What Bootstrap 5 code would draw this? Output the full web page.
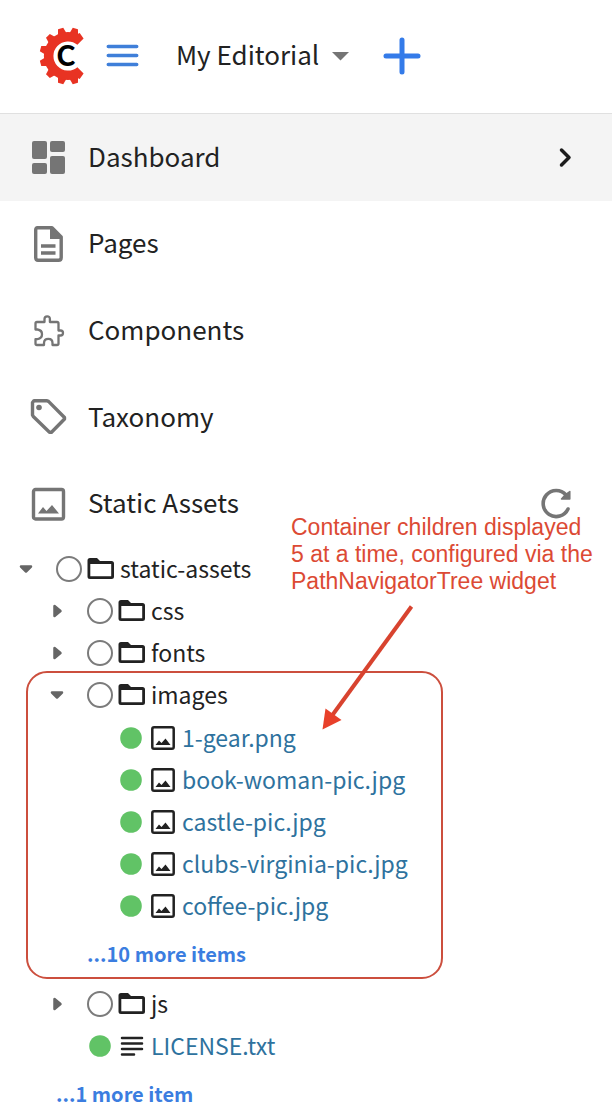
<!DOCTYPE html>
<html lang="en">
<head>
<meta charset="utf-8">
<meta name="viewport" content="width=device-width, initial-scale=1">
<title>My Editorial</title>
<link href="https://cdn.jsdelivr.net/npm/bootstrap@5.3.0/dist/css/bootstrap.min.css" rel="stylesheet">
<style>
  body { font-family: "Noto Sans CJK SC", "Noto Sans CJK JP", "Open Sans", sans-serif; color: #222; background: #fff; }
  svg { display: block; flex: none; }
  .icon-btn { border: 0; background: none; padding: 0; color: inherit; }
  .topbar { height: 114px; padding: 0 36px 2px; border-bottom: 1px solid #e0e0e0; }
  .brand-blue { color: #3f7fd9; }
  .plus-blue { color: #347be9; }
  .site-name { font-size: 26px; line-height: 36px; margin-left: 34px; gap: 8px; }
  .site-name span, .side-link span { padding-bottom: 3px; }
  .side-nav { height: 433px; }
  .side-link { padding: 0 28px; gap: 20px; font-size: 26px; line-height: 36px; color: #222; text-decoration: none; }
  .side-link.current { background: #f4f4f4; }
  .ico-gray { color: #757575; }
  .tree ul, ul.tree { list-style: none; margin: 0; padding: 0; }
  ul.tree { padding: 1px 0 0 14px; }
  .tree ul { padding-left: 31px; }
  .tree .leaves { padding-top: 1px; }
  .tree-row { height: 42px; font-size: 23px; line-height: 32px; }
  .tree-label { padding-bottom: 3px; }
  .twist { width: 24px; height: 24px; margin-right: 18px; color: #666; }
  .kind { width: 30px; margin: 0 4px; }
  .tree-row a { color: #2e729e; text-decoration: none; }
  .more-row { padding: 6px 0 8px 11px; font-size: 20px; line-height: 42px; }
  .more-row a { color: #3b7de0; font-weight: 700; text-decoration: none; }
  .frame-box { left: -19px; top: -3px; width: 417px; height: 308px; border: 2px solid #cc4f3e; border-radius: 21px; pointer-events: none; }
  .callout-text { left: 291px; top: 514px; font: 23px/27px "Liberation Sans", Arial, sans-serif; color: #dc4a34; margin: 0; white-space: nowrap; }
  .callout-arrow { left: 316px; top: 600px; pointer-events: none; }
</style>
</head>
<body>
<svg width="0" height="0" class="position-absolute" aria-hidden="true">
  <symbol id="i-folder" viewBox="0 0 30 26"><path d="M1.500 4.500Q1.500 2 4 2H11L14 5H25.500Q28 5 28 7.500V20.500Q28 23 25.500 23H4Q1.500 23 1.500 20.500ZM4.300 8V20.200H25.200V8Z" fill="currentColor" fill-rule="evenodd"/></symbol>
  <symbol id="i-ring" viewBox="0 0 26 26"><circle cx="13" cy="13" r="12" fill="none" stroke="#7b7b7b" stroke-width="2"/></symbol>
  <symbol id="i-dot" viewBox="0 0 26 26"><circle cx="13" cy="13" r="10.800" fill="#61c366"/></symbol>
  <symbol id="i-image" viewBox="0 0 24 24"><rect x="1.300" y="1.300" width="21.400" height="21.400" rx="1.800" fill="none" stroke="currentColor" stroke-width="2.500"/><path d="M4.500 19L8 14.500L10.500 17L14.500 12.500L19.500 19Z" fill="currentColor"/></symbol>
  <symbol id="i-right" viewBox="0 0 24 24"><path d="M9.500 7V17L15.500 12Z" fill="currentColor" stroke="currentColor" stroke-width="2.500" stroke-linejoin="round"/></symbol>
  <symbol id="i-down" viewBox="0 0 24 24"><path d="M7 9.500H17L12 14.500Z" fill="currentColor" stroke="currentColor" stroke-width="2.500" stroke-linejoin="round"/></symbol>
</svg>

<div class="position-relative">
  <header class="topbar d-flex align-items-center">
    <svg width="60" height="60" viewBox="0 0 60 60" role="img" aria-label="Logo">
      <g fill="#e83323">
        <path id="tooth-shape" d="M54 25.500L60.400 27.300V32.700L54 34.500Z" transform="rotate(-75 32 30)"/>
        <use href="#tooth-shape" transform="rotate(-30 32 30)"/>
        <use href="#tooth-shape" transform="rotate(-60 32 30)"/>
        <use href="#tooth-shape" transform="rotate(-90 32 30)"/>
        <use href="#tooth-shape" transform="rotate(-120 32 30)"/>
        <use href="#tooth-shape" transform="rotate(-150 32 30)"/>
        <use href="#tooth-shape" transform="rotate(-180 32 30)"/>
        <use href="#tooth-shape" transform="rotate(-210 32 30)"/>
        <path d="M41.400 18.800L47.600 12.500L43.700 7L40.500 8.500L38 6.800A24 24 0 1 0 38 53.200L40.500 51.500L43.700 53L47.600 47.500L41.400 41.200A14.600 14.600 0 1 1 41.400 18.800Z"/>
      </g>
      <text x="30" y="40" text-anchor="middle" font-family="Lato" font-weight="900" font-size="28" fill="#000">C</text>
    </svg>
    <button class="icon-btn brand-blue ms-2" aria-label="Toggle menu"><svg width="38" height="30" viewBox="0 0 38 30"><path d="M4.200 5.500H32.800M4.200 14.500H32.800M4.200 23.500H32.800" stroke="currentColor" stroke-width="3.300" stroke-linecap="round"/></svg></button>
    <button class="icon-btn site-name d-flex align-items-center">
      <span>My Editorial</span>
      <svg class="ico-gray" width="26" height="26" viewBox="0 0 26 26"><path d="M5 9H22L13.500 17.500Z" fill="currentColor"/></svg>
    </button>
    <button class="icon-btn plus-blue ms-4" aria-label="Create"><svg width="50" height="44" viewBox="0 0 50 44"><path d="M25 6V38M9 22H41" stroke="currentColor" stroke-width="5" stroke-linecap="round"/></svg></button>
  </header>

  <nav class="side-nav d-flex flex-column" aria-label="Sidebar">
    <a href="#" class="side-link current flex-fill d-flex align-items-center">
      <svg class="ico-gray" width="40" height="40" viewBox="0 0 40 40" fill="currentColor"><rect x="4" y="4" width="15" height="18" rx="2"/><rect x="22" y="4" width="15" height="11" rx="2"/><rect x="4" y="26" width="15" height="11" rx="2"/><rect x="22" y="19" width="15" height="18" rx="2"/></svg>
      <span>Dashboard</span>
      <svg class="ms-auto" width="38" height="38" viewBox="0 0 38 38"><path d="M15.500 12L23 19.500L15.500 27" fill="none" stroke="#1c1c1c" stroke-width="3.500" stroke-linecap="round" stroke-linejoin="round"/></svg>
    </a>
    <a href="#" class="side-link flex-fill d-flex align-items-center">
      <svg class="ico-gray" width="40" height="40" viewBox="0 0 40 40"><path d="M9.500 3.700H24L33.200 13V33.500Q33.200 36.300 30.500 36.300H10Q7.700 36.300 7.700 33.500V6Q7.700 3.700 9.500 3.700Z" fill="none" stroke="currentColor" stroke-width="3.400" stroke-linejoin="round"/><path d="M22 3L34 15H22Z" fill="currentColor"/><path d="M13 22H27.500M13 29H27.500" stroke="currentColor" stroke-width="3.300"/></svg>
      <span>Pages</span>
    </a>
    <a href="#" class="side-link flex-fill d-flex align-items-center">
      <svg class="ico-gray" width="40" height="40" viewBox="0 0 40 40" fill="none" stroke="currentColor" stroke-width="2.300" stroke-linejoin="round"><path d="M7.500 13.500Q7.500 12 9 12H16.500V9Q16.500 6.300 19.200 6.300T21.900 9V12H29Q30.500 12 30.500 13.500V20.500H32.500Q35 20.500 35 23T32.500 25.500H30.500V33.500Q30.500 35 29 35H24.500V33Q24.500 28.800 20.300 28.800T16 33V35H9Q7.500 35 7.500 33.500V29.200H9.500Q14 28.500 14 24.300T9.500 19.500H7.500Z"/></svg>
      <span>Components</span>
    </a>
    <a href="#" class="side-link flex-fill d-flex align-items-center">
      <svg class="ico-gray" width="40" height="40" viewBox="0 0 40 40"><path d="M6 3.700H19L20.500 4.400L36.500 20.500V22L23.500 35.300H21.500L5.300 19.500L4.500 18V5.500Z" fill="none" stroke="currentColor" stroke-width="3.400" stroke-linejoin="round"/><circle cx="11" cy="10.500" r="2.800" fill="currentColor"/></svg>
      <span>Taxonomy</span>
    </a>
    <div class="side-link flex-fill d-flex align-items-center">
      <svg class="ico-gray" width="40" height="40" viewBox="0 0 40 40"><rect x="5.500" y="5.500" width="30" height="29.500" rx="2" fill="none" stroke="currentColor" stroke-width="3.400"/><path d="M10 29.500L15 23L18.500 27L24 21L31 29.500Z" fill="currentColor"/></svg>
      <span>Static Assets</span>
      <button class="icon-btn ico-gray ms-auto me-2" aria-label="Refresh"><svg width="40" height="40" viewBox="0 0 40 40"><path d="M32 25A13 13 0 1 1 30 11" fill="none" stroke="currentColor" stroke-width="3.600" stroke-linecap="round"/><path d="M33.800 7.500V15H25.500L29.500 10.500Z" fill="currentColor" stroke="currentColor" stroke-width="1.500" stroke-linejoin="round"/></svg></button>
    </div>
  </nav>

  <ul class="tree">
    <li>
      <div class="tree-row d-flex align-items-center"><button class="icon-btn twist" aria-label="Collapse static-assets"><svg width="24" height="24"><use href="#i-down"/></svg></button><svg width="26" height="26"><use href="#i-ring"/></svg><svg class="kind" height="26"><use href="#i-folder"/></svg><span class="tree-label">static-assets</span></div>
      <ul>
        <li class="tree-row d-flex align-items-center"><button class="icon-btn twist" aria-label="Expand css"><svg width="24" height="24"><use href="#i-right"/></svg></button><svg width="26" height="26"><use href="#i-ring"/></svg><svg class="kind" height="26"><use href="#i-folder"/></svg><span class="tree-label">css</span></li>
        <li class="tree-row d-flex align-items-center"><button class="icon-btn twist" aria-label="Expand fonts"><svg width="24" height="24"><use href="#i-right"/></svg></button><svg width="26" height="26"><use href="#i-ring"/></svg><svg class="kind" height="26"><use href="#i-folder"/></svg><span class="tree-label">fonts</span></li>
        <li class="position-relative">
          <div class="tree-row d-flex align-items-center"><button class="icon-btn twist" aria-label="Collapse images"><svg width="24" height="24"><use href="#i-down"/></svg></button><svg width="26" height="26"><use href="#i-ring"/></svg><svg class="kind" height="26"><use href="#i-folder"/></svg><span class="tree-label">images</span></div>
          <ul class="leaves">
            <li class="tree-row d-flex align-items-center"><span class="twist"></span><svg width="26" height="26"><use href="#i-dot"/></svg><svg class="kind" height="24"><use href="#i-image"/></svg><a class="tree-label" href="#">1-gear.png</a></li>
            <li class="tree-row d-flex align-items-center"><span class="twist"></span><svg width="26" height="26"><use href="#i-dot"/></svg><svg class="kind" height="24"><use href="#i-image"/></svg><a class="tree-label" href="#">book-woman-pic.jpg</a></li>
            <li class="tree-row d-flex align-items-center"><span class="twist"></span><svg width="26" height="26"><use href="#i-dot"/></svg><svg class="kind" height="24"><use href="#i-image"/></svg><a class="tree-label" href="#">castle-pic.jpg</a></li>
            <li class="tree-row d-flex align-items-center"><span class="twist"></span><svg width="26" height="26"><use href="#i-dot"/></svg><svg class="kind" height="24"><use href="#i-image"/></svg><a class="tree-label" href="#">clubs-virginia-pic.jpg</a></li>
            <li class="tree-row d-flex align-items-center"><span class="twist"></span><svg width="26" height="26"><use href="#i-dot"/></svg><svg class="kind" height="24"><use href="#i-image"/></svg><a class="tree-label" href="#">coffee-pic.jpg</a></li>
            <li class="more-row"><a href="#">...10 more items</a></li>
          </ul>
          <div class="frame-box position-absolute"></div>
        </li>
        <li class="tree-row d-flex align-items-center"><button class="icon-btn twist" aria-label="Expand js"><svg width="24" height="24"><use href="#i-right"/></svg></button><svg width="26" height="26"><use href="#i-ring"/></svg><svg class="kind" height="26"><use href="#i-folder"/></svg><span class="tree-label">js</span></li>
        <li class="tree-row d-flex align-items-center"><span class="twist"></span><svg width="26" height="26"><use href="#i-dot"/></svg><svg class="kind" height="24" viewBox="0 0 30 24"><path d="M5 4H25M5 9.500H25M5 15H25M5 20.500H17" stroke="#222" stroke-width="2.500" stroke-linecap="round"/></svg><a class="tree-label" href="#">LICENSE.txt</a></li>
        <li class="more-row pb-0"><a href="#">...1 more item</a></li>
      </ul>
    </li>
  </ul>

  <p class="callout-text position-absolute">Container children displayed<br>5 at a time, configured via the<br>PathNavigatorTree widget</p>
  <svg class="callout-arrow position-absolute" width="104" height="134" viewBox="0 0 104 134"><path d="M95.500 6.500L15 117" stroke="#d8432f" stroke-width="4"/><path d="M6.500 129.500L9.500 108.500L25.500 120Z" fill="#e8402a"/></svg>
</div>
<script src="https://cdn.jsdelivr.net/npm/bootstrap@5.3.0/dist/js/bootstrap.bundle.min.js"></script>
</body>
</html>
